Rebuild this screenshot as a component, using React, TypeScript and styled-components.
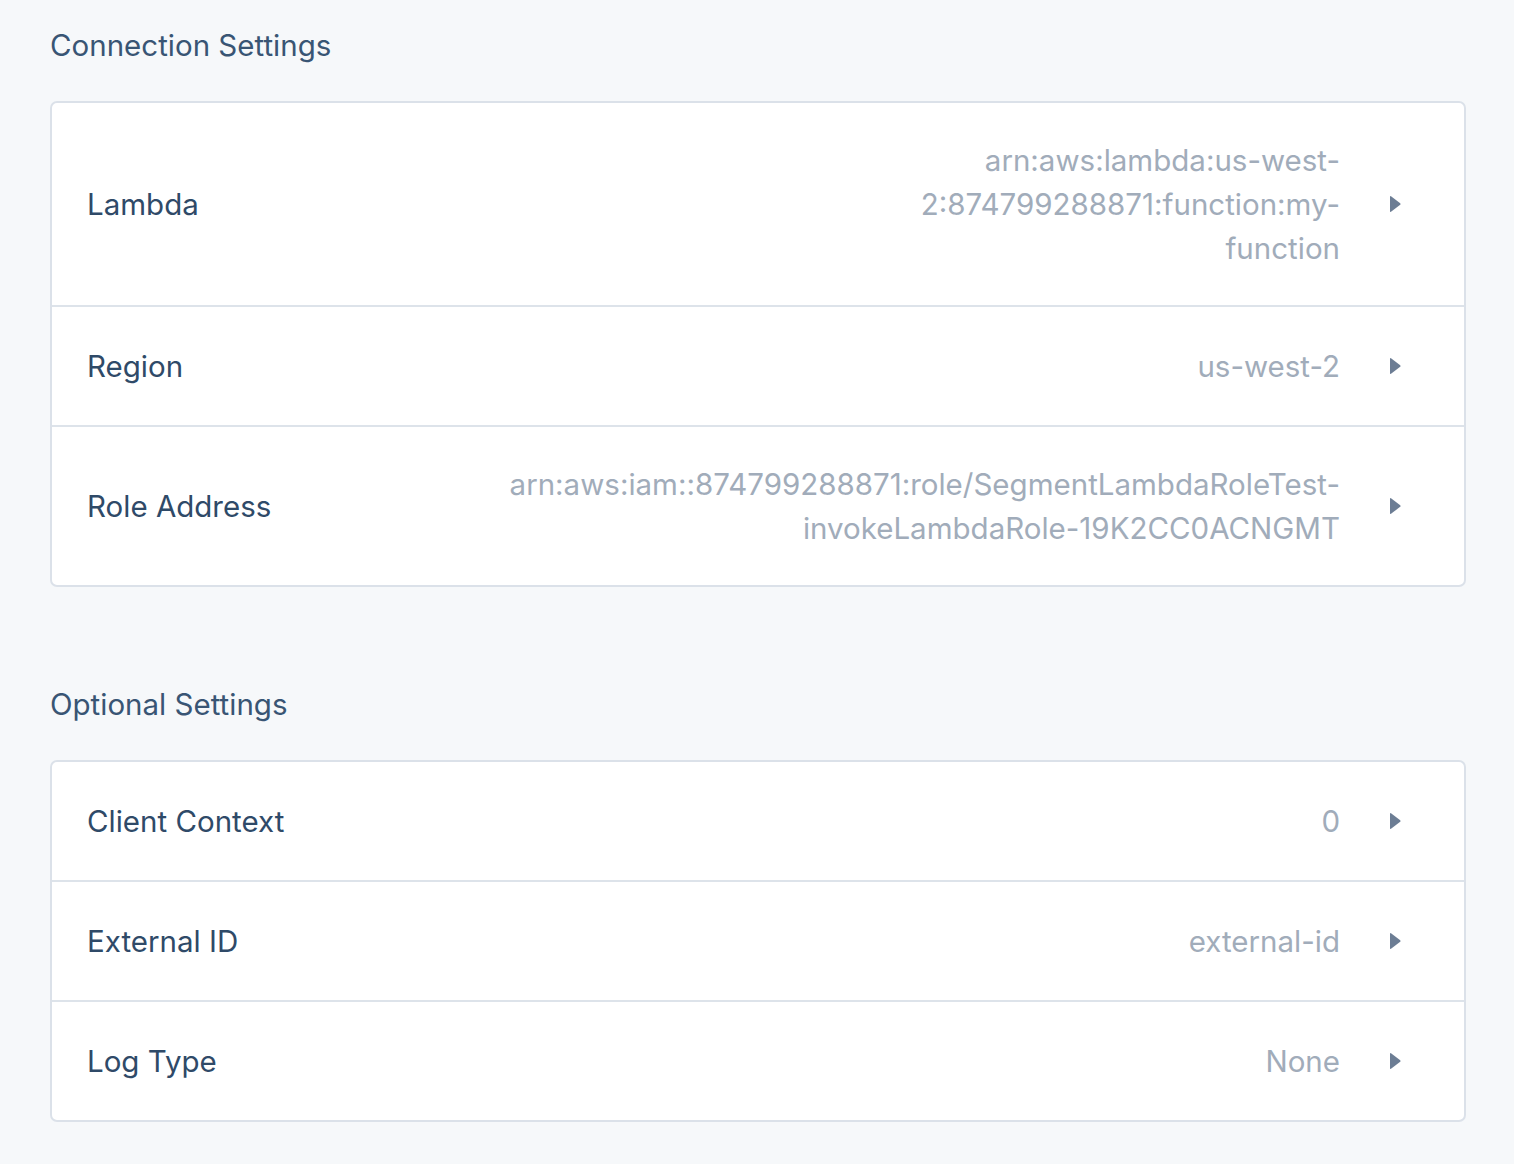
import React from "react";
import styled, { createGlobalStyle } from "styled-components";

const GlobalStyle = createGlobalStyle`
  html, body {
    margin: 0;
    padding: 0;
    background: #f6f8fa;
  }
  body {
    font-family: Inter, "Noto Sans", "Liberation Sans", sans-serif;
    -webkit-font-smoothing: antialiased;
  }
`;

const Page = styled.div`
  padding: 23px 48px 40px 50px;
  min-height: 1164px;
  box-sizing: border-box;
  background: #f6f8fa;
`;

const Section = styled.section`
  & + & {
    margin-top: 95px;
  }
`;

const Heading = styled.h2`
  margin: 0 0 34px;
  font-size: 29.5px;
  line-height: 44px;
  font-weight: 400;
  color: #395574;
`;

const Card = styled.div`
  background: #ffffff;
  border: 2px solid #dbe1e9;
  border-radius: 7px;
  overflow: hidden;
`;

const Row = styled.div`
  display: grid;
  grid-template-columns: auto 1fr 11px;
  align-items: center;
  column-gap: 50px;
  padding: 35px 63px 35px 35px;
  min-height: 48px;
  & + & {
    border-top: 2px solid #dde3ea;
  }
`;

const Label = styled.div`
  font-size: 29.5px;
  line-height: 44px;
  color: #2f4a68;
  white-space: nowrap;
`;

const Value = styled.div`
  font-size: 29.5px;
  line-height: 44px;
  color: #a1acba;
  text-align: right;
`;

const Line = styled.span`
  display: block;
`;

const Arrow = styled.svg`
  width: 11px;
  height: 18px;
  display: block;
  fill: #6c7d94;
`;

type Item = { label: string; value: string[] };

const connection: Item[] = [
  {
    label: "Lambda",
    value: ["arn:aws:lambda:us-west-", "2:874799288871:function:my-", "function"],
  },
  { label: "Region", value: ["us-west-2"] },
  {
    label: "Role Address",
    value: [
      "arn:aws:iam::874799288871:role/SegmentLambdaRoleTest-",
      "invokeLambdaRole-19K2CC0ACNGMT",
    ],
  },
];

const optional: Item[] = [
  { label: "Client Context", value: ["0"] },
  { label: "External ID", value: ["external-id"] },
  { label: "Log Type", value: ["None"] },
];

const SettingRow = ({ item }: { item: Item }) => (
  <Row>
    <Label>{item.label}</Label>
    <Value>
      {item.value.map((l, i) => (
        <Line key={i}>{l}</Line>
      ))}
    </Value>
    <Arrow viewBox="0 0 11 18">
      <path d="M1 1.2 L10.2 8.2 Q11 9 10.2 9.8 L1 16.8 Q0 17.4 0 16.2 L0 1.8 Q0 0.6 1 1.2 Z" />
    </Arrow>
  </Row>
);

export default function App() {
  return (
    <>
      <GlobalStyle />
      <Page>
        <Section>
          <Heading>Connection Settings</Heading>
          <Card>
            {connection.map((it) => (
              <SettingRow key={it.label} item={it} />
            ))}
          </Card>
        </Section>
        <Section>
          <Heading>Optional Settings</Heading>
          <Card>
            {optional.map((it) => (
              <SettingRow key={it.label} item={it} />
            ))}
          </Card>
        </Section>
      </Page>
    </>
  );
}
